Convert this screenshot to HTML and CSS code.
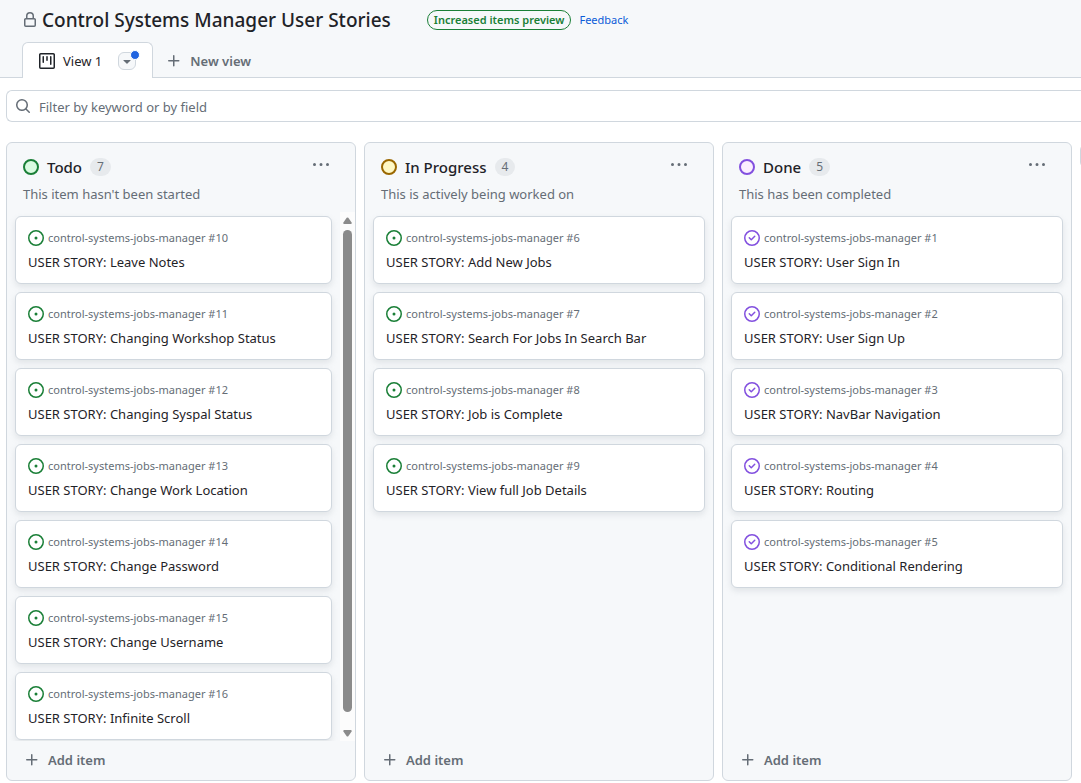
FILE: index.html
```html
<!DOCTYPE html>
<html lang="en">
<head>
<meta charset="utf-8">
<title>Control Systems Manager User Stories</title>
<link rel="stylesheet" href="styles.css">
</head>
<body>
<svg class="sprite" aria-hidden="true">
  <symbol id="open" viewBox="0 0 16 16"><path d="M8 9.5a1.5 1.5 0 1 0 0-3 1.5 1.5 0 0 0 0 3Z"/><path d="M8 0a8 8 0 1 1 0 16A8 8 0 0 1 8 0ZM1.5 8a6.5 6.5 0 1 0 13 0 6.5 6.5 0 0 0-13 0Z"/></symbol>
  <symbol id="closed" viewBox="0 0 16 16"><path d="M11.28 6.78a.75.75 0 0 0-1.06-1.06L7.25 8.69 5.78 7.22a.75.75 0 0 0-1.06 1.06l2 2a.75.75 0 0 0 1.06 0l3.5-3.5Z"/><path d="M16 8A8 8 0 1 1 0 8a8 8 0 0 1 16 0Zm-1.5 0a6.5 6.5 0 1 0-13 0 6.5 6.5 0 0 0 13 0Z"/></symbol>
  <symbol id="plus" viewBox="0 0 16 16"><path d="M7.75 2a.75.75 0 0 1 .75.75V7h4.25a.75.75 0 0 1 0 1.5H8.5v4.25a.75.75 0 0 1-1.5 0V8.5H2.75a.75.75 0 0 1 0-1.5H7V2.75A.75.75 0 0 1 7.75 2Z"/></symbol>
  <symbol id="dots" viewBox="0 0 16 16"><path d="M8 9a1.5 1.5 0 1 0 0-3 1.5 1.5 0 0 0 0 3ZM1.5 9a1.5 1.5 0 1 0 0-3 1.5 1.5 0 0 0 0 3Zm13 0a1.5 1.5 0 1 0 0-3 1.5 1.5 0 0 0 0 3Z"/></symbol>
</svg>
<header class="header">
  <div class="title-row">
    <svg class="icon lock" viewBox="0 0 16 16" aria-hidden="true"><path d="M4 4a4 4 0 0 1 8 0v2h.25c.966 0 1.75.784 1.75 1.75v5.5A1.75 1.75 0 0 1 12.25 15h-8.5A1.75 1.75 0 0 1 2 13.25v-5.5C2 6.784 2.784 6 3.75 6H4Zm8.25 3.5h-8.5a.25.25 0 0 0-.25.25v5.5c0 .138.112.25.25.25h8.5a.25.25 0 0 0 .25-.25v-5.5a.25.25 0 0 0-.25-.25ZM10.5 6V4a2.5 2.5 0 1 0-5 0v2Z"/></svg>
    <h1 class="title">Control Systems Manager User Stories</h1>
    <span class="preview">Increased items preview</span>
    <a class="feedback" href="#feedback">Feedback</a>
  </div>
  <nav class="tabs" aria-label="Views">
    <div class="tab">
      <svg class="icon" viewBox="0 0 16 16" aria-hidden="true"><path d="M1.75 0h12.5C15.216 0 16 .784 16 1.75v12.5A1.75 1.75 0 0 1 14.25 16H1.75A1.75 1.75 0 0 1 0 14.25V1.75C0 .784.784 0 1.75 0ZM1.5 1.75v12.5c0 .138.112.25.25.25h12.5a.25.25 0 0 0 .25-.25V1.75a.25.25 0 0 0-.25-.25H1.75a.25.25 0 0 0-.25.25ZM11.75 3a.75.75 0 0 1 .75.75v7.5a.75.75 0 0 1-1.5 0v-7.5a.75.75 0 0 1 .75-.75Zm-8.25.75a.75.75 0 0 1 1.5 0v5.5a.75.75 0 0 1-1.5 0ZM8 3a.75.75 0 0 1 .75.75v3.5a.75.75 0 0 1-1.5 0v-3.5A.75.75 0 0 1 8 3Z"/></svg>
      <a class="tab-name" href="#view-1">View 1</a>
      <button class="tab-menu" aria-label="View options"><svg class="icon" viewBox="0 0 16 16" aria-hidden="true"><path d="m4.427 7.427 3.396 3.396a.25.25 0 0 0 .354 0l3.396-3.396A.25.25 0 0 0 11.396 7H4.604a.25.25 0 0 0-.177.427Z"/></svg><span class="dot"></span></button>
    </div>
    <button class="plain new-view"><svg class="icon"><use href="#plus"/></svg>New view</button>
  </nav>
</header>
<div class="filter">
  <label class="filter-box">
    <svg class="icon" viewBox="0 0 16 16" aria-hidden="true"><path d="M10.68 11.74a6 6 0 0 1-7.922-8.982 6 6 0 0 1 8.982 7.922l3.04 3.04a.749.749 0 0 1-1.06 1.06l-3.04-3.04ZM11.5 7a4.499 4.499 0 1 0-8.997 0A4.499 4.499 0 0 0 11.5 7Z"/></svg>
    <input type="text" placeholder="Filter by keyword or by field" aria-label="Filter by keyword or by field">
  </label>
</div>
<main class="board">
  <section class="column">
    <header class="column-head">
      <div class="column-title"><span class="status todo"></span><h2>Todo</h2><span class="count">7</span><button class="more" aria-label="Todo options"><svg class="icon"><use href="#dots"/></svg></button></div>
      <p>This item hasn't been started</p>
    </header>
    <div class="column-body">
      <ul class="cards">
        <li class="card"><div class="ref"><svg class="icon open"><use href="#open"/></svg>control-systems-jobs-manager #10</div><a href="#10">USER STORY: Leave Notes</a></li>
        <li class="card"><div class="ref"><svg class="icon open"><use href="#open"/></svg>control-systems-jobs-manager #11</div><a href="#11">USER STORY: Changing Workshop Status</a></li>
        <li class="card"><div class="ref"><svg class="icon open"><use href="#open"/></svg>control-systems-jobs-manager #12</div><a href="#12">USER STORY: Changing Syspal Status</a></li>
        <li class="card"><div class="ref"><svg class="icon open"><use href="#open"/></svg>control-systems-jobs-manager #13</div><a href="#13">USER STORY: Change Work Location</a></li>
        <li class="card"><div class="ref"><svg class="icon open"><use href="#open"/></svg>control-systems-jobs-manager #14</div><a href="#14">USER STORY: Change Password</a></li>
        <li class="card"><div class="ref"><svg class="icon open"><use href="#open"/></svg>control-systems-jobs-manager #15</div><a href="#15">USER STORY: Change Username</a></li>
        <li class="card"><div class="ref"><svg class="icon open"><use href="#open"/></svg>control-systems-jobs-manager #16</div><a href="#16">USER STORY: Infinite Scroll</a></li>
      </ul>
      <div class="scrollbar" aria-hidden="true">
        <svg class="arrow" viewBox="0 0 9 7"><path d="M3.7.8Q4.500 0 5.300.8L8.600 5.400Q9 7 8 7H1Q0 7 .4 5.400Z"/></svg>
        <span class="thumb"></span>
        <svg class="arrow" viewBox="0 0 9 7"><path d="M3.700 6.200Q4.500 7 5.300 6.200L8.600 1.600Q9 0 8 0H1Q0 0 .4 1.600Z"/></svg>
      </div>
    </div>
    <button class="plain add"><svg class="icon"><use href="#plus"/></svg>Add item</button>
  </section>
  <section class="column">
    <header class="column-head">
      <div class="column-title"><span class="status progress"></span><h2>In Progress</h2><span class="count">4</span><button class="more" aria-label="In Progress options"><svg class="icon"><use href="#dots"/></svg></button></div>
      <p>This is actively being worked on</p>
    </header>
    <div class="column-body">
      <ul class="cards">
        <li class="card"><div class="ref"><svg class="icon open"><use href="#open"/></svg>control-systems-jobs-manager #6</div><a href="#6">USER STORY: Add New Jobs</a></li>
        <li class="card"><div class="ref"><svg class="icon open"><use href="#open"/></svg>control-systems-jobs-manager #7</div><a href="#7">USER STORY: Search For Jobs In Search Bar</a></li>
        <li class="card"><div class="ref"><svg class="icon open"><use href="#open"/></svg>control-systems-jobs-manager #8</div><a href="#8">USER STORY: Job is Complete</a></li>
        <li class="card"><div class="ref"><svg class="icon open"><use href="#open"/></svg>control-systems-jobs-manager #9</div><a href="#9">USER STORY: View full Job Details</a></li>
      </ul>
    </div>
    <button class="plain add"><svg class="icon"><use href="#plus"/></svg>Add item</button>
  </section>
  <section class="column">
    <header class="column-head">
      <div class="column-title"><span class="status done"></span><h2>Done</h2><span class="count">5</span><button class="more" aria-label="Done options"><svg class="icon"><use href="#dots"/></svg></button></div>
      <p>This has been completed</p>
    </header>
    <div class="column-body">
      <ul class="cards">
        <li class="card"><div class="ref"><svg class="icon closed"><use href="#closed"/></svg>control-systems-jobs-manager #1</div><a href="#1">USER STORY: User Sign In</a></li>
        <li class="card"><div class="ref"><svg class="icon closed"><use href="#closed"/></svg>control-systems-jobs-manager #2</div><a href="#2">USER STORY: User Sign Up</a></li>
        <li class="card"><div class="ref"><svg class="icon closed"><use href="#closed"/></svg>control-systems-jobs-manager #3</div><a href="#3">USER STORY: NavBar Navigation</a></li>
        <li class="card"><div class="ref"><svg class="icon closed"><use href="#closed"/></svg>control-systems-jobs-manager #4</div><a href="#4">USER STORY: Routing</a></li>
        <li class="card"><div class="ref"><svg class="icon closed"><use href="#closed"/></svg>control-systems-jobs-manager #5</div><a href="#5">USER STORY: Conditional Rendering</a></li>
      </ul>
    </div>
    <button class="plain add"><svg class="icon"><use href="#plus"/></svg>Add item</button>
  </section>
  <button class="add-column" aria-label="Add a new column"></button>
</main>
</body>
</html>
```
FILE: styles.css
```css
* { box-sizing: border-box; }
body {
  margin: 0;
  height: 100vh;
  display: flex;
  flex-direction: column;
  overflow: hidden;
  background: #fff;
  color: #1f2328;
  font: 13px/20px "Segoe UI", "Noto Sans", sans-serif;
}
h1, h2, p, ul { margin: 0; padding: 0; font-weight: 500; }
button { font: inherit; padding: 0; border: 0; background: none; color: inherit; }
a { color: inherit; text-decoration: none; }
.sprite { display: none; }
.icon { width: 16px; height: 16px; flex: none; fill: currentColor; }

.header { flex: none; background: #f6f8fa; border-bottom: 1px solid #d0d7de; padding: 4px 22px 0; }
.title-row { display: flex; align-items: center; height: 32px; }
.lock { color: #656d76; margin-right: 4px; }
.title { font-size: 19px; line-height: 32px; white-space: nowrap; }
.preview {
  margin: 0 8px 0 36px;
  padding: 0 6px;
  border: 1px solid #1a7f37;
  border-radius: 10px;
  color: #1a7f37;
  font-size: 11px;
  line-height: 18px;
  font-weight: 600;
  white-space: nowrap;
}
.feedback { color: #0b5bd8; font-size: 11px; }
.tabs { display: flex; margin-top: 6px; margin-bottom: -1px; }
.tab {
  display: flex;
  align-items: center;
  height: 36px;
  padding: 0 16px;
  border: 1px solid #d0d7de;
  border-bottom: 0;
  border-radius: 6px 6px 0 0;
  background: #fff;
}
.tab-name { margin: 0 16px 0 8px; }
.tab-menu {
  position: relative;
  display: flex;
  align-items: center;
  justify-content: center;
  width: 18px;
  height: 18px;
  border: 1px solid #d0d7de;
  border-radius: 6px;
  background: #f6f8fa;
  color: #656d76;
}
.dot { position: absolute; top: -3px; right: -5px; width: 10px; height: 10px; border: 1px solid #fff; border-radius: 50%; background: #1f63e0; }
.plain { display: flex; align-items: center; gap: 8px; color: #656d76; font-weight: 600; }
.new-view { margin-left: 13px; height: 38px; }

.filter { flex: none; padding: 12px 0 20px 6px; }
.tabs { height: 36px; }
.filter-box {
  display: flex;
  align-items: center;
  gap: 8px;
  height: 32px;
  padding-left: 8px;
  border: 1px solid #d0d7de;
  border-right: 0;
  border-radius: 6px 0 0 6px;
  color: #656d76;
}
.filter-box input { flex: 1; border: 0; padding: 1px 0 0; outline: 0; background: none; font: inherit; color: #1f2328; }
.filter-box input::placeholder { color: #656d76; opacity: 1; }

.board { flex: 1; min-height: 0; display: flex; gap: 8px; padding: 0 0 2px 6px; overflow: hidden; }
.column {
  flex: 0 0 350px;
  display: flex;
  flex-direction: column;
  border: 1px solid #d0d7de;
  border-radius: 6px;
  background: #f6f8fa;
}
.column-head { padding: 12px 16px 0; height: 69px; }
.column-head p { margin-top: 5px; color: #656d76; font-weight: 400; }
.column-title { display: flex; align-items: center; gap: 8px; height: 24px; }
.column-title h2 { font-size: 15px; line-height: 24px; }
.status { width: 16px; height: 16px; border: 2px solid; border-radius: 50%; }
.todo { border-color: #1a7f37; background: #dafbe1; }
.progress { border-color: #9a6700; background: #fff8c5; }
.done { border-color: #8250df; background: #fbefff; }
.count { padding: 0 7px; border-radius: 9px; background: #e7eaed; color: #656d76; font-size: 12px; line-height: 18px; }
.more { display: flex; align-self: flex-start; margin: 2px 10px 0 auto; color: #656d76; }

.column-body { flex: 1; min-height: 0; display: flex; }
.cards { flex: 1; min-width: 0; display: flex; flex-direction: column; gap: 8px; padding: 4px 8px 0; list-style: none; overflow: hidden; font-weight: 400; }
.card {
  flex: none;
  padding: 12px 12px 11px;
  border: 1px solid #d0d7de;
  border-radius: 6px;
  background: #fff;
  box-shadow: 0 3px 6px rgba(140, 149, 159, 0.2);
}
.card a { display: block; }
.ref { display: flex; align-items: center; gap: 4px; margin-bottom: 5px; color: #656d76; font-size: 11px; line-height: 18px; }
.open { color: #1a7f37; }
.closed { color: #8250df; }
.scrollbar { flex: 0 0 15px; display: flex; flex-direction: column; align-items: center; padding: 5px 0 4px; background: #fcfcfc; }
.arrow { flex: none; width: 9px; height: 7px; fill: #8b8b8b; }
.thumb { flex: 1; width: 9px; margin: 6px 0 18px; border-radius: 5px; background: #8b8b8b; }
.add { flex: none; height: 39px; padding: 0 0 2px 17px; }
.add-column { flex: 0 0 32px; height: 24px; margin-top: 2px; border: 1px solid #d0d7de; border-radius: 6px; background: #f6f8fa; }
```
